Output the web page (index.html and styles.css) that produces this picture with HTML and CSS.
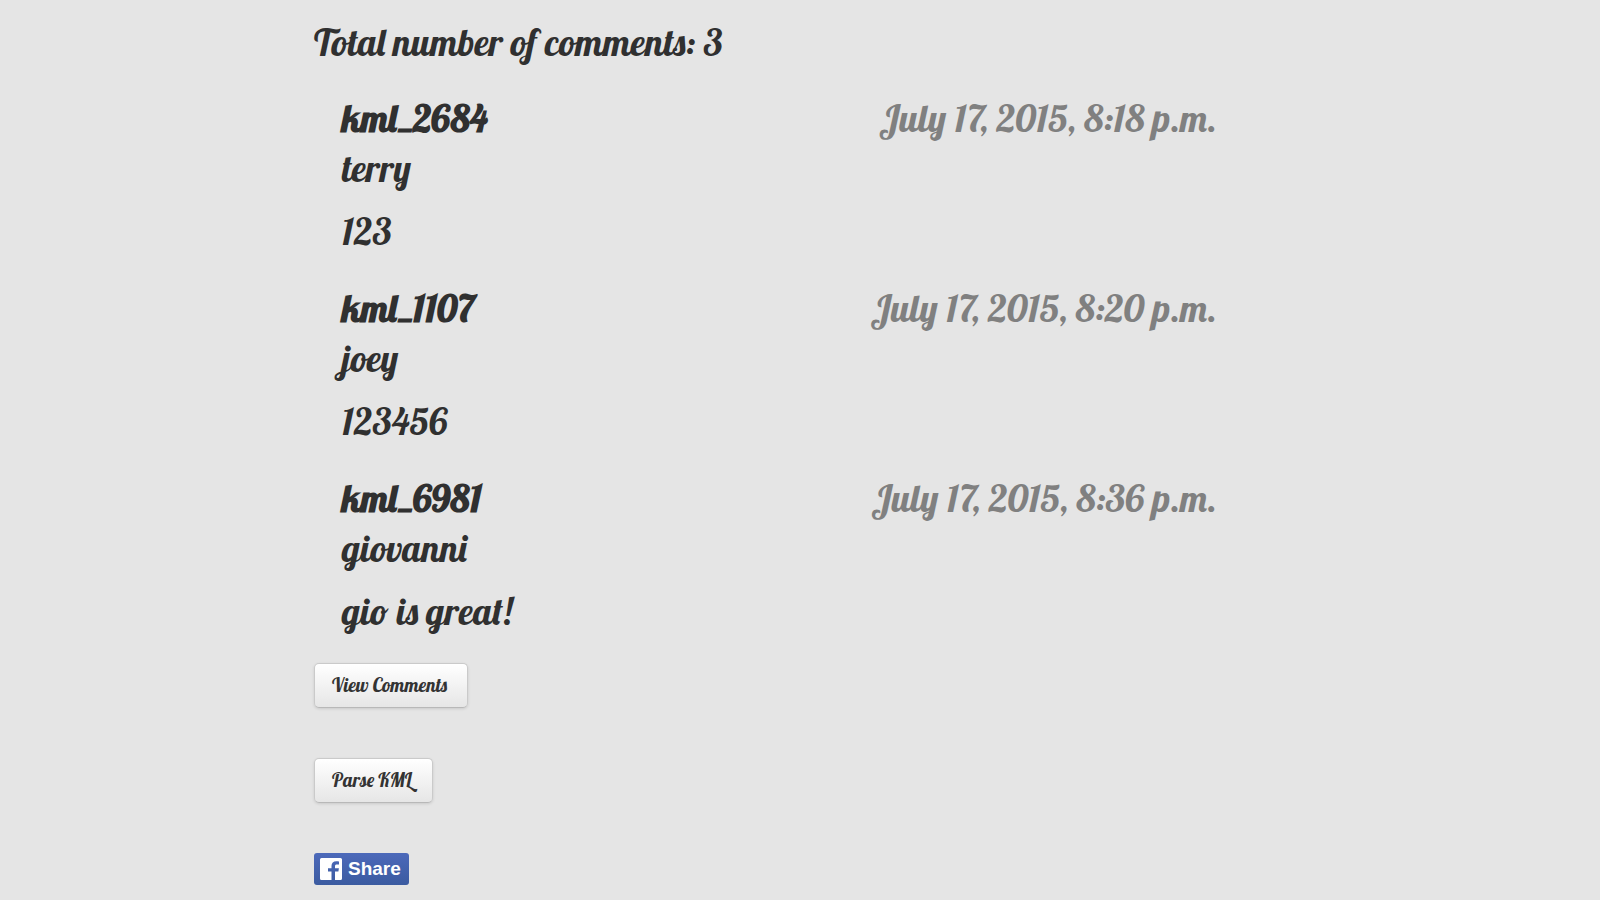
FILE: index.html
```html
<!DOCTYPE html>
<html lang="en">
<head>
<meta charset="utf-8">
<meta name="viewport" content="width=device-width, initial-scale=1">
<title>Comments</title>
<link rel="stylesheet" href="styles.css">
</head>
<body>
<main class="page">
  <h1 class="total">Total number of comments: 3</h1>
  <section class="comments" aria-label="Comments">
    <article class="comment">
      <header class="comment-head"><strong class="name">kml_2684</strong><time class="date" datetime="2015-07-17T20:18">July 17, 2015, 8:18 p.m.</time></header>
      <p class="author">terry</p>
      <p class="message">123</p>
    </article>
    <article class="comment">
      <header class="comment-head"><strong class="name">kml_1107</strong><time class="date" datetime="2015-07-17T20:20">July 17, 2015, 8:20 p.m.</time></header>
      <p class="author">joey</p>
      <p class="message">123456</p>
    </article>
    <article class="comment">
      <header class="comment-head"><strong class="name">kml_6981</strong><time class="date" datetime="2015-07-17T20:36">July 17, 2015, 8:36 p.m.</time></header>
      <p class="author">giovanni</p>
      <p class="message">gio is great!</p>
    </article>
  </section>
  <div class="actions">
    <button class="btn" type="button">View Comments</button>
    <button class="btn" type="button">Parse KML</button>
    <button class="share" type="button">
      <svg class="share-icon" viewBox="0 0 22 22" aria-hidden="true"><path fill="#fff" d="M1.500 0h19A1.500 1.500 0 0 1 22 1.500v19a1.500 1.500 0 0 1-1.500 1.500H15v-8.500h3.400l.5-3.300H15V8.300c0-1.100.5-1.700 1.800-1.700h2.200V3.500c-.6-.1-1.600-.2-2.700-.2-3 0-4.800 1.700-4.800 4.600v2.300H8v3.300h3.500V22H1.500A1.500 1.500 0 0 1 0 20.500v-19A1.500 1.500 0 0 1 1.500 0z"/></svg>
      <span>Share</span>
    </button>
  </div>
</main>
</body>
</html>
```
FILE: styles.css
```css
* {
  box-sizing: border-box;
}

body {
  margin: 0;
  background: #e5e5e5;
  color: #303030;
  font-family: Lobster, "Liberation Serif", serif;
  font-size: 37px;
  line-height: 50px;
}

.page {
  max-width: 972px;
  margin: 0 auto;
  padding: 17px 0 15px;
}

.total {
  margin: 0 0 26px;
  font-size: 37px;
  font-weight: 400;
}

.comments {
  display: flex;
  flex-direction: column;
  gap: 27px;
  padding: 0 69px 0 28px;
}

.comment-head {
  display: flex;
  flex-wrap: wrap;
  justify-content: space-between;
}

.date {
  color: #808080;
  font-size: 38px;
}

.author,
.message {
  margin: 0;
}

.message {
  margin-top: 13px;
}

.actions {
  display: flex;
  flex-direction: column;
  align-items: flex-start;
  gap: 50px;
  margin-top: 27px;
}

.btn {
  padding: 10px 20px 10px 17px;
  border: 1px solid #cacaca;
  border-bottom-color: #b8b8b8;
  border-radius: 5px;
  background: linear-gradient(#ffffff, #e6e6e6);
  box-shadow: inset 0 1px 0 #ffffff, 0 1px 3px rgba(0, 0, 0, 0.12);
  color: #333333;
  font: inherit;
  font-size: 19px;
  line-height: 23px;
}

.share {
  display: flex;
  align-items: center;
  gap: 6px;
  padding: 5px 8px 5px 6px;
  border: 0;
  border-radius: 3px;
  background: linear-gradient(#4c69ba, #3b5ba0);
  color: #ffffff;
  font: bold 19px/22px "Liberation Sans", Arial, sans-serif;
}

.share-icon {
  width: 22px;
  height: 22px;
}
```
